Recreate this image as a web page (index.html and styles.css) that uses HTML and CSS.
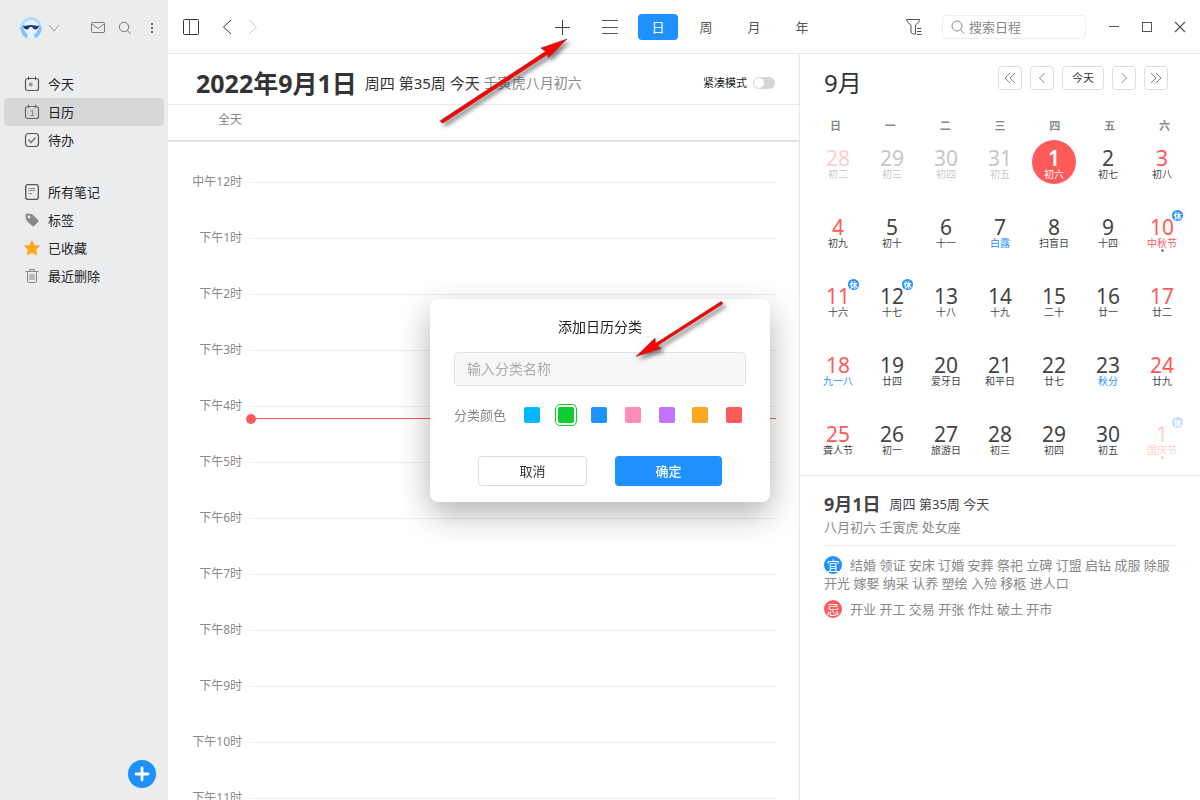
FILE: index.html
```html
<!DOCTYPE html>
<html lang="zh-CN">
<head>
<meta charset="utf-8">
<title>日历</title>
<link rel="stylesheet" href="styles.css">
</head>
<body>
<div class="app">
  <aside class="sidebar">
    <header class="profile">
      <svg class="avatar" viewBox="0 0 22 22"><circle cx="11" cy="11" r="11" fill="#b4dbfc"/><path d="M0 11Q1 18 7 22H15Q21 18 22 11L19 9H3Z" fill="#86c2f8"/><circle cx="11" cy="10.500" r="7.400" fill="#e4f2ff"/><path d="M7 22Q7.500 15 11 15T15 22Z" fill="#e8f4ff"/><path d="M2.500 8.500Q5 9.200 7 8.600Q11 7.400 15 8.600Q17 9.200 19.500 8.500L18.200 10.200Q17.500 12.500 15.300 12.500Q13.300 12.500 12.500 10.300Q11 9.400 9.500 10.300Q8.700 12.500 6.700 12.500Q4.500 12.500 3.800 10.200Z" fill="#22347f"/></svg>
      <button class="icon-btn" aria-label="账号"><svg width="12" height="12" viewBox="0 0 12 12"><path d="M1 3L6 9L11 3" stroke="#999"/></svg></button>
      <div class="profile-tools">
        <button class="icon-btn" aria-label="消息"><svg width="14" height="12" viewBox="0 0 14 12"><rect x=".5" y=".5" width="13" height="10" rx="1" stroke="#777"/><path d="M1 2L7 6.500L13 2" stroke="#777"/></svg></button>
        <button class="icon-btn" aria-label="搜索"><svg width="14" height="14" viewBox="0 0 14 14"><circle cx="6" cy="6" r="4.700" stroke="#777"/><path d="M9.300 9.500L12.500 13" stroke="#777"/></svg></button>
        <button class="icon-btn" aria-label="更多"><svg width="4" height="12" viewBox="0 0 4 12"><g fill="#666"><rect x="1" y="1" width="2" height="2"/><rect x="1" y="5" width="2" height="2"/><rect x="1" y="9" width="2" height="2"/></g></svg></button>
      </div>
    </header>
    <nav class="menu">
      <a class="menu-item" href="#"><svg viewBox="0 0 16 16"><rect x="1.500" y="2.500" width="13" height="12" rx="2" stroke="#555" stroke-width="1.200"/><path d="M4.500 .500V4M11.500 .500V4" stroke="#555"/><circle cx="6.700" cy="8.500" r="2" fill="#999"/></svg>今天</a>
      <a class="menu-item active" href="#"><svg viewBox="0 0 16 16"><rect x="1.500" y="2.500" width="13" height="12" rx="2" stroke="#666" stroke-width="1.200"/><path d="M4.500 .500V4M11.500 .500V4" stroke="#666"/><path d="M6.500 7.500L8.500 6.500V12M6.500 11.500H10" stroke="#888"/></svg>日历</a>
      <a class="menu-item" href="#"><svg viewBox="0 0 16 16"><rect x="1.500" y="1.500" width="13" height="13" rx="3" stroke="#555" stroke-width="1.200"/><path d="M4.500 7.500L7 10.500L11.500 5.500" stroke="#777" stroke-width="1.500"/></svg>待办</a>
    </nav>
    <nav class="menu">
      <a class="menu-item" href="#"><svg viewBox="0 0 16 16"><rect x="1.700" y=".7" width="12.600" height="14.600" rx="2" stroke="#555" stroke-width="1.300"/><path d="M4.500 4.500H11M4.500 6.500H11M4.500 9.500H8" stroke="#888"/></svg>所有笔记</a>
      <a class="menu-item" href="#"><svg viewBox="0 0 16 16"><path fill-rule="evenodd" d="M1.500 3Q1.500 1.500 3 1.500L8 2L14.300 8.200Q15 9 14.300 9.800L10 14Q9 14.700 8.200 14L2 8ZM5 3.600A1.400 1.400 0 1 0 5 6.400A1.400 1.400 0 1 0 5 3.600Z" fill="#888"/></svg>标签</a>
      <a class="menu-item" href="#"><svg viewBox="0 0 16 16"><path d="M8 .8L10.200 5.500L15.300 6.100L11.600 9.600L12.600 14.800L8 12.300L3.400 14.800L4.400 9.600L.7 6.100L5.800 5.500Z" fill="#ffa61a" stroke="#ffa61a" stroke-linejoin="round"/></svg>已收藏</a>
      <a class="menu-item" href="#"><svg viewBox="0 0 16 16"><path d="M1.500 3.500H14.500M5.500 3V1.500H10.500V3M3.500 3.500V13.500Q3.500 14.500 4.500 14.500H11.500Q12.500 14.500 12.500 13.500V3.500M6 6V12M8 6V12M10 6V12" stroke="#888"/></svg>最近删除</a>
    </nav>
    <button class="create" aria-label="新建"><svg width="16" height="16" viewBox="0 0 16 16"><path d="M8 2V14M2 8H14" stroke="#fff" stroke-width="2.800" stroke-linecap="round"/></svg></button>
  </aside>

  <div class="content">
    <header class="toolbar">
      <div class="tool-group">
        <button class="icon-btn" aria-label="侧栏"><svg width="16" height="16" viewBox="0 0 16 16"><rect x=".5" y=".5" width="15" height="15" rx="1" stroke="#333"/><path d="M6.500 0V16" stroke="#555"/></svg></button>
        <button class="icon-btn back" aria-label="后退"><svg width="10" height="16" viewBox="0 0 10 16"><path d="M9 1L1.500 8L9 15" stroke="#333"/></svg></button>
        <button class="icon-btn" aria-label="前进"><svg width="10" height="16" viewBox="0 0 10 16"><path d="M1 1L8.500 8L1 15" stroke="#ccc"/></svg></button>
      </div>
      <div class="views">
        <button class="view" aria-label="添加"><svg width="16" height="16" viewBox="0 0 16 16"><path d="M8.500 1V16M1 8.500H16" stroke="#444"/></svg></button>
        <button class="view" aria-label="列表"><svg width="16" height="14" viewBox="0 0 16 14"><path d="M0 .5H16M0 7.500H16M0 13.500H16" stroke="#555"/></svg></button>
        <button class="view selected">日</button>
        <button class="view">周</button>
        <button class="view">月</button>
        <button class="view">年</button>
      </div>
      <div class="tool-group end">
        <button class="icon-btn" aria-label="筛选"><svg width="18" height="18" viewBox="0 0 18 18"><path d="M1.500 1.500H14.500Q15 4 10.500 7V16Q8.500 17 6 14.500V7Q1.500 4 1.500 1.500Z" stroke="#555"/><path d="M12 10.500H16.500M12 13.500H16.500M12 16.500H16.500" stroke="#555"/></svg></button>
        <label class="search"><svg width="14" height="14" viewBox="0 0 14 14"><circle cx="6" cy="6" r="5" stroke="#888"/><path d="M9.500 9.500L13 13.500" stroke="#888"/></svg><input type="search" placeholder="搜索日程" aria-label="搜索日程"></label>
        <div class="window-controls">
          <button class="icon-btn" aria-label="最小化"><svg width="12" height="12" viewBox="0 0 12 12"><path d="M1 5.500H11" stroke="#555"/></svg></button>
          <button class="icon-btn" aria-label="最大化"><svg width="12" height="12" viewBox="0 0 12 12"><rect x="1.500" y="1.500" width="9" height="9" stroke="#555"/></svg></button>
          <button class="icon-btn" aria-label="关闭"><svg width="12" height="12" viewBox="0 0 12 12"><path d="M1 1L11 11M11 1L1 11" stroke="#555" stroke-width="1.200"/></svg></button>
        </div>
      </div>
    </header>

    <div class="panes">
      <main class="day">
        <header class="day-header">
          <h1>2022年9月1日</h1>
          <span class="week">周四 第35周 今天</span>
          <span class="lunar-date">壬寅虎八月初六</span>
          <label class="compact">紧凑模式<input type="checkbox" role="switch"></label>
        </header>
        <div class="all-day">全天</div>
        <div class="timeline">
          <div class="hour">中午12时</div>
          <div class="hour">下午1时</div>
          <div class="hour">下午2时</div>
          <div class="hour">下午3时</div>
          <div class="hour">下午4时</div>
          <div class="hour">下午5时</div>
          <div class="hour">下午6时</div>
          <div class="hour">下午7时</div>
          <div class="hour">下午8时</div>
          <div class="hour">下午9时</div>
          <div class="hour">下午10时</div>
          <div class="hour">下午11时</div>
          <div class="now" style="top: 276px"></div>
        </div>
      </main>

      <aside class="month">
        <section class="month-view">
          <header class="month-header">
            <h2>9月</h2>
            <div class="pager">
              <button aria-label="上一年"><svg width="12" height="12" viewBox="0 0 12 12"><path d="M6 1L1 6L6 11M11 1L6 6L11 11" stroke="#888"/></svg></button>
              <button aria-label="上个月"><svg width="12" height="12" viewBox="0 0 12 12"><path d="M8.500 1L3.500 6L8.500 11" stroke="#888"/></svg></button>
              <button class="today-btn">今天</button>
              <button aria-label="下个月"><svg width="12" height="12" viewBox="0 0 12 12"><path d="M3.500 1L8.500 6L3.500 11" stroke="#888"/></svg></button>
              <button aria-label="下一年"><svg width="12" height="12" viewBox="0 0 12 12"><path d="M1 1L6 6L1 11M6 1L11 6L6 11" stroke="#888"/></svg></button>
            </div>
          </header>
          <div class="weekdays"><span>日</span><span>一</span><span>二</span><span>三</span><span>四</span><span>五</span><span>六</span></div>
          <div class="dates">
            <button class="date rest other"><b>28</b><small>初二</small></button>
            <button class="date other"><b>29</b><small>初三</small></button>
            <button class="date other"><b>30</b><small>初四</small></button>
            <button class="date other"><b>31</b><small>初五</small></button>
            <button class="date today"><b>1</b><small>初六</small></button>
            <button class="date"><b>2</b><small>初七</small></button>
            <button class="date rest"><b>3</b><small>初八</small></button>

            <button class="date rest"><b>4</b><small>初九</small></button>
            <button class="date"><b>5</b><small>初十</small></button>
            <button class="date"><b>6</b><small>十一</small></button>
            <button class="date"><b>7</b><small class="term">白露</small></button>
            <button class="date"><b>8</b><small>扫盲日</small></button>
            <button class="date"><b>9</b><small>十四</small></button>
            <button class="date rest event"><b>10</b><small class="festival">中秋节</small><i class="off">休</i></button>

            <button class="date rest"><b>11</b><small>十六</small><i class="off">休</i></button>
            <button class="date"><b>12</b><small>十七</small><i class="off">休</i></button>
            <button class="date"><b>13</b><small>十八</small></button>
            <button class="date"><b>14</b><small>十九</small></button>
            <button class="date"><b>15</b><small>二十</small></button>
            <button class="date"><b>16</b><small>廿一</small></button>
            <button class="date rest"><b>17</b><small>廿二</small></button>

            <button class="date rest"><b>18</b><small class="term">九一八</small></button>
            <button class="date"><b>19</b><small>廿四</small></button>
            <button class="date"><b>20</b><small>爱牙日</small></button>
            <button class="date"><b>21</b><small>和平日</small></button>
            <button class="date"><b>22</b><small>廿七</small></button>
            <button class="date"><b>23</b><small class="term">秋分</small></button>
            <button class="date rest"><b>24</b><small>廿九</small></button>

            <button class="date rest"><b>25</b><small>聋人节</small></button>
            <button class="date"><b>26</b><small>初一</small></button>
            <button class="date"><b>27</b><small>旅游日</small></button>
            <button class="date"><b>28</b><small>初三</small></button>
            <button class="date"><b>29</b><small>初四</small></button>
            <button class="date"><b>30</b><small>初五</small></button>
            <button class="date rest event other"><b>1</b><small class="festival">国庆节</small><i class="off">休</i></button>
          </div>
        </section>
        <section class="almanac">
          <div class="almanac-title"><h3>9月1日</h3><span>周四 第35周 今天</span></div>
          <p class="almanac-lunar">八月初六 壬寅虎 处女座</p>
          <p class="advice"><span class="mark good">宜</span>结婚 领证 安床 订婚 安葬 祭祀 立碑 订盟 启钻 成服 除服 开光 嫁娶 纳采 认养 塑绘 入殓 移柩 进人口</p>
          <p class="advice"><span class="mark bad">忌</span>开业 开工 交易 开张 作灶 破土 开市</p>
        </section>
      </aside>
    </div>
  </div>
</div>

<div class="overlay">
  <form class="dialog" role="dialog" aria-labelledby="dialog-title">
    <h2 id="dialog-title">添加日历分类</h2>
    <input class="name" type="text" placeholder="输入分类名称" aria-label="分类名称">
    <fieldset class="colors">
      <legend class="colors-label">分类颜色</legend>
      <div class="swatches">
        <input class="swatch sky" type="radio" name="color" aria-label="天蓝">
        <input class="swatch green" type="radio" name="color" aria-label="绿色" checked>
        <input class="swatch blue" type="radio" name="color" aria-label="蓝色">
        <input class="swatch pink" type="radio" name="color" aria-label="粉色">
        <input class="swatch purple" type="radio" name="color" aria-label="紫色">
        <input class="swatch orange" type="radio" name="color" aria-label="橙色">
        <input class="swatch red" type="radio" name="color" aria-label="红色">
      </div>
    </fieldset>
    <div class="actions">
      <button class="cancel" type="button">取消</button>
      <button class="confirm" type="button">确定</button>
    </div>
  </form>
</div>

<svg class="pointer pointer-add" width="140" height="100" viewBox="0 0 140 100"><path d="M130 1L104 10L108.500 13.500L3.500 82.500Q3.500 85 6 85L110.500 16.500L111.500 19.500Z" fill="#f00" stroke="#833" stroke-width=".6" stroke-linejoin="round"/></svg>
<svg class="pointer pointer-name" width="100" height="70" viewBox="0 0 100 70"><path d="M3 58.500L22 40L22.500 45.500L88 3.500Q90 4 89.500 6L24.500 47.500L28 50.500Z" fill="#f00" stroke="#833" stroke-width=".6" stroke-linejoin="round"/></svg>
</body>
</html>
```

FILE: styles.css
```css
* { box-sizing: border-box; }

body {
  margin: 0;
  overflow: hidden;
  font-family: "Noto Sans", "Noto Sans CJK SC", sans-serif;
  font-size: 13px;
  line-height: 18px;
  color: #333;
  background: #fff;
}

h1, h2, h3, p { margin: 0; }

button {
  padding: 0;
  border: 0;
  background: none;
  color: inherit;
  font: inherit;
}

svg { display: block; fill: none; flex: none; }

input { font: inherit; margin: 0; }

.app { display: flex; height: 100vh; }

.icon-btn {
  display: flex;
  align-items: center;
  justify-content: center;
  width: 24px;
  height: 24px;
}

/* Sidebar */
.sidebar {
  display: flex;
  flex-direction: column;
  gap: 24px;
  flex: none;
  width: 168px;
  padding-bottom: 12px;
  background: #ebecee;
}

.profile {
  display: flex;
  align-items: center;
  height: 54px;
  margin-bottom: -8px;
  padding: 2px 4px 0 20px;
}

.avatar { width: 22px; height: 22px; border-radius: 50%; }

.profile-tools { display: flex; gap: 3px; margin-left: auto; }

.menu { padding: 0 4px; }

.menu-item {
  display: flex;
  align-items: center;
  gap: 8px;
  height: 28px;
  padding-left: 20px;
  border-radius: 4px;
  color: #222;
  text-decoration: none;
}

.menu-item svg { width: 16px; height: 16px; }

.menu-item.active { background: #d6d7d9; }

.create {
  display: flex;
  align-items: center;
  justify-content: center;
  align-self: flex-end;
  width: 28px;
  height: 28px;
  margin: auto 12px 0 0;
  border-radius: 50%;
  background: #1e90ff;
}

/* Toolbar */
.content {
  display: flex;
  flex-direction: column;
  flex: 1;
  min-width: 0;
}

.toolbar {
  display: grid;
  grid-template-columns: 1fr auto 1fr;
  align-items: center;
  flex: none;
  height: 54px;
  padding: 0 8px 0 4px;
  border-bottom: 1px solid #e8e8e8;
}

.tool-group { display: flex; align-items: center; padding-left: 7px; gap: 2px; }

.back { margin-left: 10px; }

.end { justify-content: flex-end; padding: 0; gap: 16px; }

.views { display: flex; gap: 8px; }

.view {
  display: flex;
  align-items: center;
  justify-content: center;
  width: 40px;
  height: 26px;
  border-radius: 4px;
  color: #555;
}

.view.selected { background: #1e90ff; color: #fff; }

.search {
  display: flex;
  align-items: center;
  gap: 4px;
  width: 144px;
  height: 24px;
  padding: 0 8px;
  border: 1px solid #eee;
  border-radius: 4px;
}

.search input {
  flex: 1;
  min-width: 0;
  padding: 0;
  border: 0;
  outline: 0;
  background: none;
}

.search input::placeholder { color: #888; }

.window-controls { display: flex; gap: 9px; }

/* Day view */
.panes {
  display: grid;
  grid-template-columns: 1fr 401px;
  flex: 1;
  min-height: 0;
}

.day {
  display: flex;
  flex-direction: column;
  min-width: 0;
  min-height: 0;
}

.day-header {
  display: flex;
  align-items: center;
  flex: none;
  height: 51px;
  padding: 8px 24px 0 28px;
  border-bottom: 1px solid #e8e8e8;
}

.day-header h1 { font-size: 25px; line-height: 32px; }

.week { margin-left: 8px; font-size: 15px; }

.lunar-date { margin-left: 4px; font-size: 14px; color: #888; }

.compact {
  display: flex;
  align-items: center;
  gap: 6px;
  margin-left: auto;
  font-size: 11px;
  color: #222;
}

.compact input {
  display: flex;
  align-items: center;
  appearance: none;
  width: 22px;
  height: 12px;
  border-radius: 6px;
  background: #d6d6d6;
}

.compact input::before {
  content: "";
  width: 10px;
  height: 10px;
  margin-left: 1px;
  border-radius: 50%;
  background: #fff;
}

.all-day {
  flex: none;
  height: 37px;
  padding: 6px 0 0 50px;
  border-bottom: 2px solid #e2e2e2;
  font-size: 12px;
  color: #888;
}

.timeline {
  position: relative;
  flex: 1;
  min-height: 0;
  padding: 12px 23px 0 0;
  overflow: hidden;
}

.hour {
  display: grid;
  grid-template-columns: 74px 1fr;
  gap: 8px;
  align-items: center;
  height: 56px;
  font-size: 12px;
  line-height: 20px;
  color: #888;
  text-align: right;
}

.hour::after { content: ""; height: 1px; background: #eee; }

.now {
  position: absolute;
  left: 82px;
  right: 23px;
  height: 1px;
  background: #ff5a5a;
}

.now::before {
  content: "";
  position: absolute;
  left: -4px;
  top: -4px;
  width: 10px;
  height: 10px;
  border-radius: 50%;
  background: #ff5a5a;
}

/* Month view */
.month { border-left: 1px solid #e8e8e8; }

.month-view {
  padding: 12px 0 15px;
  border-bottom: 1px solid #e8e8e8;
}

.month-header {
  display: flex;
  justify-content: space-between;
  height: 34px;
  padding: 0 32px 0 24px;
}

.month-header h2 { font-size: 24px; font-weight: 400; line-height: 34px; }

.pager { display: flex; gap: 8px; }

.pager button {
  display: flex;
  align-items: center;
  justify-content: center;
  width: 24px;
  height: 24px;
  border: 1px solid #ddd;
  border-radius: 4px;
  font-size: 11px;
}

.pager .today-btn { width: 42px; }

.weekdays {
  display: grid;
  grid-template-columns: repeat(7, 1fr);
  margin: 17px 8px 5px;
  font-size: 11px;
  font-weight: 700;
  color: #888;
  text-align: center;
}

.dates {
  display: grid;
  grid-template-columns: repeat(7, 1fr);
  row-gap: 25px;
  justify-items: center;
  padding: 0 11px;
}

.date {
  position: relative;
  display: flex;
  flex-direction: column;
  align-items: center;
  width: 44px;
  height: 44px;
  padding-top: 7px;
  border-radius: 50%;
  color: #444;
}

.date b { font-size: 21px; font-weight: 400; line-height: 22px; }

.date small { font-size: 10px; line-height: 10px; }

.date.rest b, .date .festival { color: #ff5a5a; }

.date .term { color: #1e90ff; }

.date.other { opacity: .3; }

.date.today { background: #ff5a5a; color: #fff; }

.date.today b { font-weight: 600; }

.off {
  position: absolute;
  top: 1px;
  right: 1px;
  width: 11px;
  height: 11px;
  border-radius: 50%;
  background: #1e90ff;
  color: #fff;
  font-size: 8px;
  font-style: normal;
  font-weight: 700;
  line-height: 11px;
}

.event::after {
  content: "";
  width: 3px;
  height: 3px;
  margin-top: 1px;
  flex: none;
  border-radius: 50%;
  background: #888;
}

.almanac { padding: 18px 24px; color: #888; }

.almanac-title { display: flex; align-items: center; gap: 9px; color: #444; }

.almanac-title h3 { font-size: 18px; line-height: 20px; }

.almanac-lunar {
  padding: 4px 0 9px;
  border-bottom: 1px solid #eee;
}

.advice { margin-top: 8px; }

.almanac-lunar + .advice { margin-top: 10px; }

.mark {
  display: inline-block;
  width: 18px;
  height: 18px;
  margin-right: 8px;
  border-radius: 50%;
  color: #fff;
  text-align: center;
  vertical-align: top;
}

.good { background: #1e90ff; }

.bad { background: #ff5a5a; }

/* Dialog */
.overlay {
  position: fixed;
  inset: 0;
  display: grid;
  place-items: center;
}

.dialog {
  width: 340px;
  padding: 18px 24px 16px;
  border-radius: 8px;
  background: #fff;
  box-shadow: 0 12px 32px rgba(0, 0, 0, .3);
}

.dialog h2 {
  font-size: 14px;
  font-weight: 400;
  line-height: 20px;
  text-align: center;
  color: #222;
}

.name {
  width: 100%;
  height: 34px;
  margin-top: 15px;
  padding: 0 12px;
  border: 1px solid #e2e2e2;
  border-radius: 4px;
  background: #f7f7f7;
  font-size: 14px;
}

.name::placeholder { color: #aaa; }

.colors {
  display: flex;
  align-items: center;
  margin: 18px 0 0;
  padding: 0;
  border: 0;
}

.colors-label { float: left; padding: 0; color: #888; line-height: 22px; }

.swatches {
  display: flex;
  align-items: center;
  justify-content: space-between;
  flex: 1;
  height: 22px;
  margin: 0 4px 0 18px;
}

.swatch {
  appearance: none;
  width: 16px;
  height: 16px;
  border-radius: 2px;
}

.swatch:checked { outline: 1px solid #10cc30; outline-offset: 2px; }

.sky { background: #00b7ff; }
.green { background: #10cc30; }
.blue { background: #1e90ff; }
.pink { background: #ff8bb7; }
.purple { background: #c273ff; }
.orange { background: #ffa61f; }
.red { background: #ff5a5a; }

.actions {
  display: flex;
  gap: 28px;
  margin-top: 30px;
  padding: 0 24px;
}

.actions button { flex: 1; height: 30px; border-radius: 4px; }

.actions .cancel { border: 1px solid #ddd; }

.actions .confirm { background: #1e90ff; color: #fff; font-weight: 500; }

/* Pointer arrows drawn over the window */
.pointer {
  position: absolute;
  overflow: visible;
  pointer-events: none;
  filter: drop-shadow(3px 3px 2px rgba(0, 0, 0, .5));
}

.pointer-add { left: 437px; top: 38px; }

.pointer-name { left: 633px; top: 298px; }
```
